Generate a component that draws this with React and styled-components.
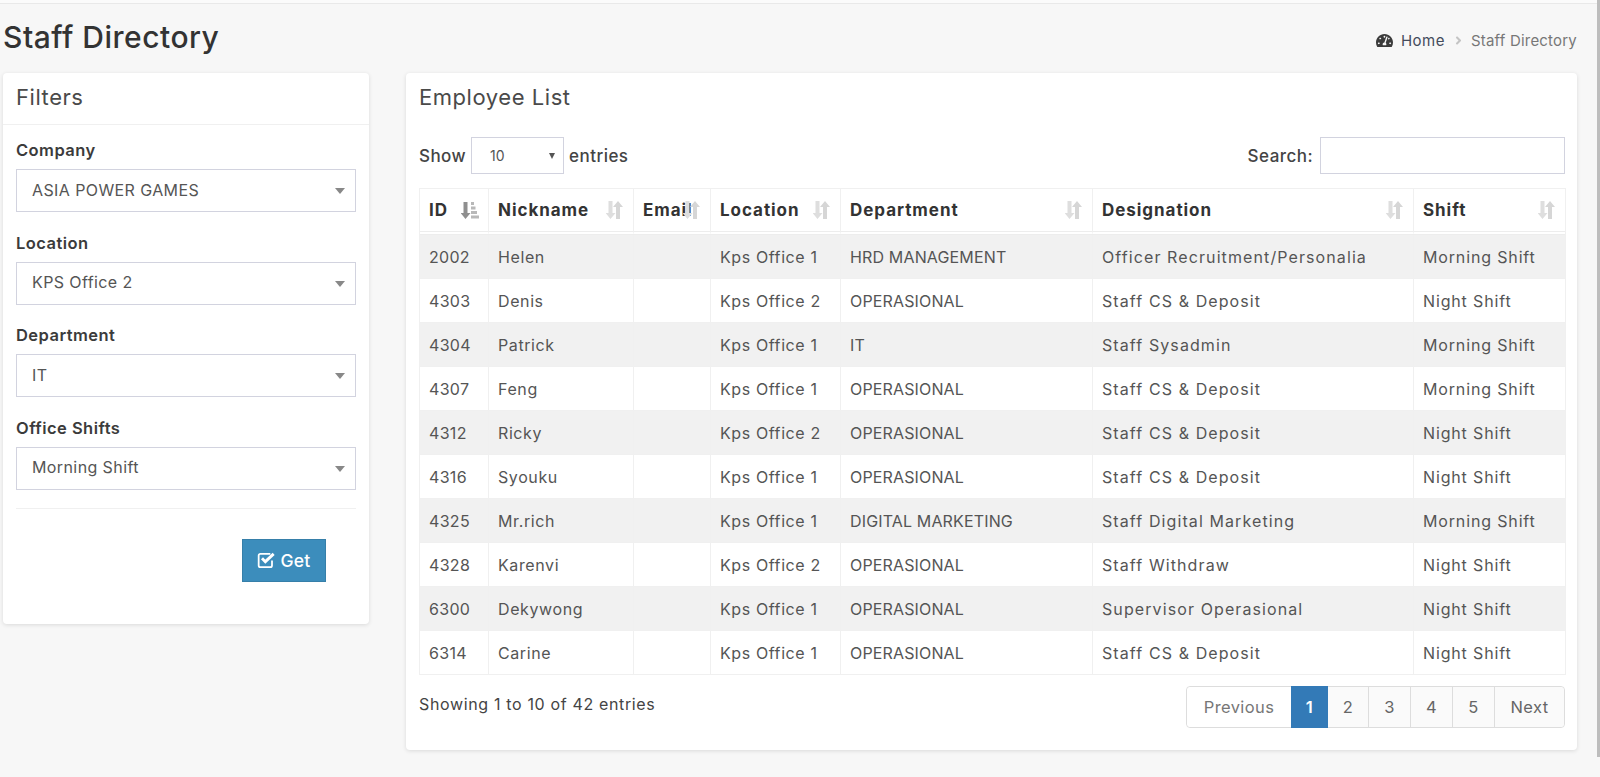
import { FaTachometerAlt, FaAngleRight } from "react-icons/fa";
import styled, { createGlobalStyle } from "styled-components";

const GlobalStyle = createGlobalStyle`
  html, body {
    margin: 0;
    padding: 0;
    height: 100%;
    background: #f7f7f7;
    overflow: hidden;
  }
  * { box-sizing: border-box; }
  body {
    font-family: "Inter", "Liberation Sans", sans-serif;
    font-size: 16px;
    color: #555;
  }
`;

const Page = styled.div`
  position: relative;
  height: 777px;
  padding: 0 23px 0 3px;
`;

const TopStrip = styled.div`
  height: 4px;
  margin: 0 0 0 -3px;
  width: 1597px;
  background: #fbfbfb;
  border-bottom: 1px solid #e9e9e9;
`;

const ScrollThumb = styled.div`
  position: absolute;
  top: 0;
  right: 0;
  width: 3px;
  height: 757px;
  background: #bdbdbd;
`;

const PageHead = styled.div`
  display: flex;
  align-items: center;
  justify-content: space-between;
  height: 69px;
  padding-bottom: 4px;
`;

const Title = styled.h1`
  margin: 0;
  font-size: 30px;
  font-weight: 500;
  color: #333;
  letter-spacing: 0.5px;
`;

const Crumbs = styled.div`
  display: flex;
  align-items: center;
  font-size: 15px;
  letter-spacing: 0.2px;
  color: #777;
  padding-top: 7px;
`;

const CrumbHome = styled.span`
  color: #444c5c;
  letter-spacing: 0.5px;
  margin: 0 7px 0 8px;
`;

const CrumbIcon = styled(FaTachometerAlt)`
  color: #3b3b3b;
`;

const CrumbArrow = styled(FaAngleRight)`
  color: #c4c4c4;
`;

const CrumbCurrent = styled.span`
  margin-left: 6px;
`;

const Columns = styled.div`
  display: flex;
  align-items: flex-start;
  gap: 37px;
`;

const Card = styled.section`
  background: #fff;
  border-radius: 4px;
  box-shadow: 0 1px 4px rgba(0, 0, 0, 0.12);
  width: ${(p) => p.$width}px;
  height: ${(p) => p.$height}px;
`;

const CardHead = styled.div`
  height: 52px;
  display: flex;
  align-items: center;
  padding: 0 12px 4px 13px;
  font-size: 22px;
  letter-spacing: 0.55px;
  color: #4a4a4a;
  border-bottom: ${(p) => (p.$line ? "1px solid #f0f0f0" : "none")};
`;

const FilterBody = styled.div`
  padding: 13px 13px 0;
`;

const Field = styled.div`
  margin-bottom: 18.67px;
`;

const Label = styled.div`
  font-size: 16.5px;
  font-weight: 600;
  letter-spacing: 0.45px;
  color: #3b3b3b;
  line-height: 24px;
  margin-bottom: 7px;
`;

const FakeSelect = styled.div`
  position: relative;
  height: 43px;
  border: 1px solid #d2d3df;
  display: flex;
  align-items: center;
  padding: 0 0 2px 15px;
  font-size: 16px;
  letter-spacing: 0.4px;
  color: #555;
  &::after {
    content: "";
    position: absolute;
    right: 10px;
    top: 18px;
    border-left: 5px solid transparent;
    border-right: 5px solid transparent;
    border-top: 6px solid #888;
  }
`;

const Rule = styled.div`
  border-top: 1px solid #f0f0f0;
  margin-top: -1px;
`;

const ButtonRow = styled.div`
  display: flex;
  justify-content: flex-end;
  padding: 30px 30px 0 0;
`;

const GetButton = styled.button`
  display: flex;
  align-items: center;
  justify-content: center;
  gap: 3px;
  width: 84px;
  height: 43px;
  background: #3c8dbc;
  border: 1px solid #367fa9;
  color: #fff;
  font-family: inherit;
  font-size: 17.5px;
  font-weight: 500;
  letter-spacing: 0.3px;
`;

const ListBody = styled.div`
  padding: 12px 12px 0 13px;
`;

const Controls = styled.div`
  display: flex;
  align-items: center;
  justify-content: space-between;
  height: 37px;
  margin-bottom: 14px;
`;

const ControlGroup = styled.div`
  display: flex;
  align-items: center;
  gap: 5px;
  font-size: 17px;
  font-weight: 500;
  letter-spacing: 0.45px;
  color: #444;
`;

const LengthSelect = styled.div`
  position: relative;
  width: 93px;
  height: 37px;
  border: 1px solid #d2d3df;
  display: flex;
  align-items: center;
  padding-left: 18px;
  font-size: 14px;
  font-weight: 400;
  letter-spacing: 0;
  color: #555;
  &::after {
    content: "";
    position: absolute;
    right: 8px;
    top: 15px;
    border-left: 3.5px solid transparent;
    border-right: 3.5px solid transparent;
    border-top: 6px solid #555;
  }
`;

const SearchBox = styled.input`
  width: 245px;
  height: 37px;
  border: 1px solid #d2d3df;
  margin-left: 2px;
  background: #fff;
`;

const Table = styled.table`
  border-collapse: separate;
  border-spacing: 0;
  table-layout: fixed;
  width: 1146px;
  border: 1px solid #f0f0f0;
  border-bottom: none;
`;

const Col = styled.col`
  width: ${(p) => p.$w}px;
`;

const HeadCell = styled.th`
  position: relative;
  height: 46px;
  padding: 0 9px;
  text-align: left;
  font-size: 17px;
  font-weight: 700;
  letter-spacing: 0.95px;
  color: #333;
  white-space: nowrap;
  border-right: 1px solid #f0f0f0;
  border-bottom: 4px double #ededed;
  &:last-child { border-right: none; }
`;

const SortMark = styled.svg`
  position: absolute;
  right: 9px;
  top: 12px;
`;

const Row = styled.tr`
  background: ${(p) => (p.$odd ? "#f1f1f1" : "#fff")};
`;

const Cell = styled.td`
  height: 44px;
  padding: 0 9px;
  font-size: 16px;
  letter-spacing: ${(p) => p.$spacing || "0.6px"};
  color: #555;
  white-space: nowrap;
  border-right: 1px solid #f0f0f0;
  border-bottom: 1px solid #f0f0f0;
  &:last-child { border-right: none; }
`;

const Footer = styled.div`
  display: flex;
  align-items: flex-start;
  justify-content: space-between;
  padding-top: 11px;
`;

const Info = styled.div`
  font-size: 16px;
  letter-spacing: 0.65px;
  color: #444;
  line-height: 37px;
`;

const Pager = styled.div`
  display: flex;
  height: 42px;
  border: 1px solid #ddd;
  border-radius: 4px;
`;

const PageLink = styled.div`
  display: flex;
  align-items: center;
  justify-content: center;
  width: ${(p) => p.$w}px;
  margin: ${(p) => (p.$active ? "-1px 0" : "0")};
  font-size: 16.5px;
  letter-spacing: 0.4px;
  font-weight: ${(p) => (p.$active ? 600 : 400)};
  color: ${(p) => (p.$active ? "#fff" : p.$muted ? "#777" : "#666")};
  background: ${(p) => (p.$active ? "#337ab7" : p.$muted ? "#fff" : "#fafafa")};
  border-left: ${(p) => (p.$plain ? "none" : "1px solid #ddd")};
  border-radius: ${(p) => (p.$muted ? "4px 0 0 4px" : "0")};
  &:last-child { border-radius: 0 4px 4px 0; }
`;

const columns = [
  { name: "ID", width: 69 },
  { name: "Nickname", width: 145 },
  { name: "Email", width: 77 },
  { name: "Location", width: 130 },
  { name: "Department", width: 252 },
  { name: "Designation", width: 321 },
  { name: "Shift", width: 151 },
];

const rows = [
  ["2002", "Helen", "Kps Office 1", "HRD MANAGEMENT", "Officer Recruitment/Personalia", "Morning Shift"],
  ["4303", "Denis", "Kps Office 2", "OPERASIONAL", "Staff CS & Deposit", "Night Shift"],
  ["4304", "Patrick", "Kps Office 1", "IT", "Staff Sysadmin", "Morning Shift"],
  ["4307", "Feng", "Kps Office 1", "OPERASIONAL", "Staff CS & Deposit", "Morning Shift"],
  ["4312", "Ricky", "Kps Office 2", "OPERASIONAL", "Staff CS & Deposit", "Night Shift"],
  ["4316", "Syouku", "Kps Office 1", "OPERASIONAL", "Staff CS & Deposit", "Night Shift"],
  ["4325", "Mr.rich", "Kps Office 1", "DIGITAL MARKETING", "Staff Digital Marketing", "Morning Shift"],
  ["4328", "Karenvi", "Kps Office 2", "OPERASIONAL", "Staff Withdraw", "Night Shift"],
  ["6300", "Dekywong", "Kps Office 1", "OPERASIONAL", "Supervisor Operasional", "Night Shift"],
  ["6314", "Carine", "Kps Office 1", "OPERASIONAL", "Staff CS & Deposit", "Night Shift"],
];

const filters = [
  ["Company", "ASIA POWER GAMES"],
  ["Location", "KPS Office 2"],
  ["Department", "IT"],
  ["Office Shifts", "Morning Shift"],
];

const pages = [
  ["2", 40],
  ["3", 42],
  ["4", 42],
  ["5", 42],
];

function SortIcon({ sorted }) {
  if (sorted) {
    return (
      <SortMark width="18" height="18" viewBox="0 0 18 18">
        <path d="M2.500 1h4v11h3l-5 6-5-6h3z" fill="#8f8f8f" />
        <path d="M10 1h3v3h-3zM10 5.500h4.500v3H10zM10 10h6v3h-6zM10 14.500h8v3h-8z" fill="#b8b8b8" />
      </SortMark>
    );
  }
  return (
    <SortMark width="18" height="18" viewBox="0 0 18 18">
      <path d="M2.500 0h4v12h3l-5 6-5-6h3z" fill="#dedede" />
      <path d="M11 18V6H8l5-6 5 6h-3v12z" fill="#d6d6d6" transform="translate(-1 0)" />
    </SortMark>
  );
}

function CheckIcon() {
  return (
    <svg width="20" height="18" viewBox="0 0 18 16" fill="none" stroke="#fff">
      <path d="M13.500 8.500V13a1.500 1.500 0 0 1-1.500 1.500H3A1.500 1.500 0 0 1 1.500 13V4A1.500 1.500 0 0 1 3 2.500h9" strokeWidth="1.600" />
      <path d="M4.500 6.500L7.500 9.500L15 2.500" strokeWidth="2.600" />
    </svg>
  );
}

export default function App() {
  return (
    <>
      <GlobalStyle />
      <Page>
        <ScrollThumb />
        <TopStrip />
        <PageHead>
          <Title>Staff Directory</Title>
          <Crumbs>
            <CrumbIcon size={17} />
            <CrumbHome>Home</CrumbHome>
            <CrumbArrow size={13} />
            <CrumbCurrent>Staff Directory</CrumbCurrent>
          </Crumbs>
        </PageHead>
        <Columns>
          <Card $width={366} $height={551}>
            <CardHead $line>Filters</CardHead>
            <FilterBody>
              {filters.map(([label, value]) => (
                <Field key={label}>
                  <Label>{label}</Label>
                  <FakeSelect>{value}</FakeSelect>
                </Field>
              ))}
              <Rule />
              <ButtonRow>
                <GetButton>
                  <CheckIcon /> Get
                </GetButton>
              </ButtonRow>
            </FilterBody>
          </Card>
          <Card $width={1171} $height={677}>
            <CardHead>Employee List</CardHead>
            <ListBody>
              <Controls>
                <ControlGroup>
                  Show <LengthSelect>10</LengthSelect> entries
                </ControlGroup>
                <ControlGroup>
                  Search: <SearchBox />
                </ControlGroup>
              </Controls>
              <Table>
                <colgroup>
                  {columns.map((c) => (
                    <Col key={c.name} $w={c.width} />
                  ))}
                </colgroup>
                <thead>
                  <tr>
                    {columns.map((c) => (
                      <HeadCell key={c.name}>
                        {c.name}
                        <SortIcon sorted={c.name === "ID"} />
                      </HeadCell>
                    ))}
                  </tr>
                </thead>
                <tbody>
                  {rows.map((r, i) => (
                    <Row key={r[0]} $odd={i % 2 === 0}>
                      <Cell $spacing="0.3px">{r[0]}</Cell>
                      <Cell>{r[1]}</Cell>
                      <Cell />
                      <Cell>{r[2]}</Cell>
                      <Cell $spacing="0.15px">{r[3]}</Cell>
                      <Cell $spacing="1.1px">{r[4]}</Cell>
                      <Cell $spacing="0.85px">{r[5]}</Cell>
                    </Row>
                  ))}
                </tbody>
              </Table>
              <Footer>
                <Info>Showing 1 to 10 of 42 entries</Info>
                <Pager>
                  <PageLink $w={104} $muted $plain>Previous</PageLink>
                  <PageLink $w={37} $active $plain>1</PageLink>
                  {pages.map(([n, w], i) => (
                    <PageLink key={n} $w={w} $plain={i === 0}>{n}</PageLink>
                  ))}
                  <PageLink $w={70}>Next</PageLink>
                </Pager>
              </Footer>
            </ListBody>
          </Card>
        </Columns>
      </Page>
    </>
  );
}
